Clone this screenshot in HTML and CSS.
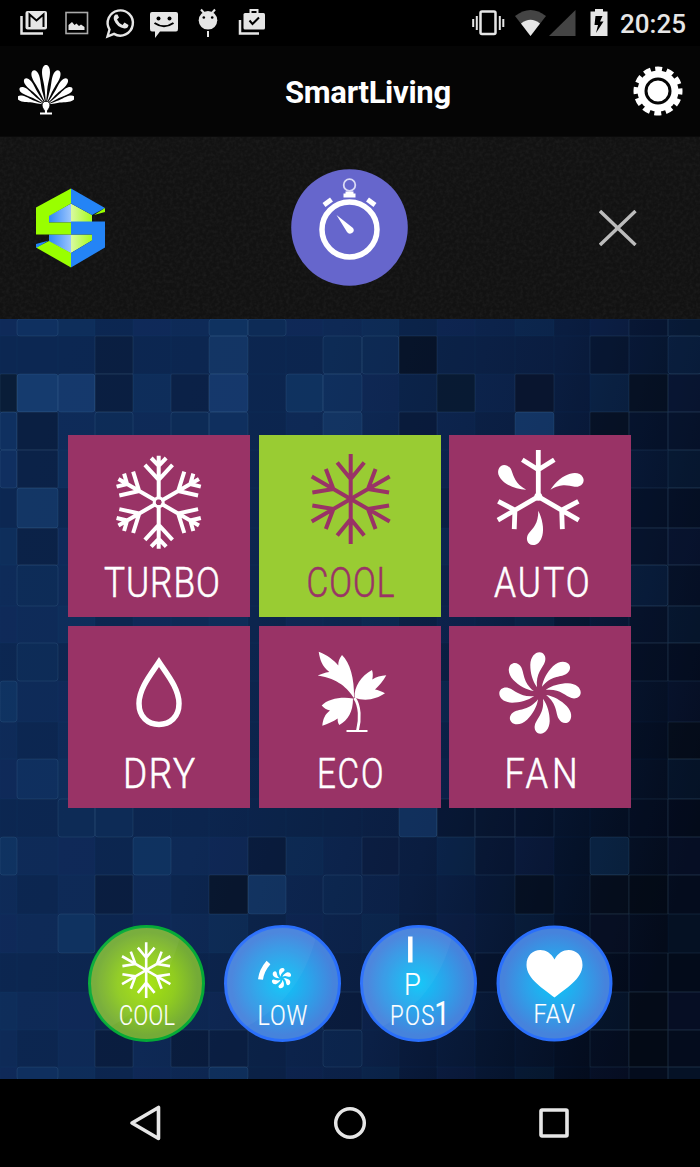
FILE: index.html
```html
<!DOCTYPE html>
<html lang="en">
  <head>
    <meta charset="UTF-8">
    <meta name="viewport" content="width=device-width, initial-scale=1.0">
    <title>SmartLiving</title>
    <link rel="stylesheet" href="styles.css">
  </head>
  <body>
    <!-- Shared shapes -->
    <svg width="0" height="0" class="defs">
      <defs>
        <path id="feather" d="M0 -2 L-1 -12 C-1.500 -22 -4 -27 -4 -33 C-4 -42.500 4 -42.500 4 -33 C4 -27 1.500 -22 1 -12 Z" />
        <path id="cool-arm" d="M0 0V-45M0 -20L-13.5 -36.5M0 -20L13.5 -36.5" />
        <g id="cool-flake">
          <use href="#cool-arm" />
          <use href="#cool-arm" transform="rotate(60)" />
          <use href="#cool-arm" transform="rotate(120)" />
          <use href="#cool-arm" transform="rotate(180)" />
          <use href="#cool-arm" transform="rotate(240)" />
          <use href="#cool-arm" transform="rotate(300)" />
        </g>
        <path id="turbo-arm" d="M0 -3V-46.5M0 -22.5L-13.8 -37.5M0 -22.5L13.8 -37.5M0 -36.5L-7.5 -44.3M0 -36.5L7.5 -44.3" />
        <path id="auto-arm" d="M0 0V-46.7M0 -27L-16 -37M0 -27L16 -37" />
        <path id="auto-drop" d="M0 14C4 22 6 32 4 39C2.500 45 -1 48.300 -5.300 48.300C-11.500 48.300 -13 41 -9.500 36.500C-5 31 0 27 0 14Z" />
        <path id="blade" d="M-3 -5.700C-7.500 -12 -9.700 -20 -9.700 -28C-9.500 -36 -5 -40.700 -0.500 -40.700C4 -40.700 6.400 -36 5 -31.500C3 -25 -4.500 -20 -3 -5.700Z" />
        <path id="gloss" d="M91.500 14C82 49 63 81 21.500 102A56 56 0 0 1 91.500 14Z" />
        <radialGradient id="blue" cx="50%" cy="50%" r="50%">
          <stop offset="0" stop-color="#0cc6f8" />
          <stop offset="0.5" stop-color="#2ca2ea" />
          <stop offset="0.9" stop-color="#4683dc" />
          <stop offset="1" stop-color="#4683dc" />
        </radialGradient>
        <radialGradient id="green" cx="50%" cy="50%" r="50%">
          <stop offset="0" stop-color="#a6e40c" />
          <stop offset="0.5" stop-color="#90cc20" />
          <stop offset="0.9" stop-color="#74ab37" />
          <stop offset="1" stop-color="#74ab37" />
        </radialGradient>
        <linearGradient id="logo-blue">
          <stop offset="0" stop-color="#2f86f8" />
          <stop offset="1" stop-color="#9cc5fb" />
        </linearGradient>
        <linearGradient id="logo-green">
          <stop offset="0" stop-color="#d9f9a0" />
          <stop offset="1" stop-color="#a6fb1c" />
        </linearGradient>
        <filter id="grain">
          <feTurbulence type="fractalNoise" baseFrequency="0.3" numOctaves="2" />
          <feColorMatrix values="0 0 0 0 1  0 0 0 0 1  0 0 0 0 1  0.08 0 0 0 -0.03" />
        </filter>
      </defs>
    </svg>

    <div class="status-bar">
      <div class="notifications">
        <svg width="44" height="46">
          <path class="line" d="M10.500 16V33.500H32" stroke-width="2.500" />
          <rect class="fill" x="14.500" y="11" width="21.500" height="18.500" rx="2" />
          <path d="M18.500 27V14.500L25.500 20.500L32.500 14.500V27" fill="none" stroke="#000" stroke-width="2" />
        </svg>
        <svg width="44" height="46">
          <rect x="11" y="12.500" width="21.500" height="21" fill="none" stroke="#aaa" stroke-width="1.600" />
          <path class="fill" d="M13.500 30V25L17 22L19.500 25L21.500 23.500L24 26L26 24.500L29.500 27V30Z" />
        </svg>
        <svg width="44" height="46">
          <path class="line" d="M8.500 36.500L10.500 29.500A12.600 12.600 0 1 1 15 33.900Z" stroke-width="2.400" />
          <path class="fill" d="M16.500 14.500Q14 16 15 20Q18 27.500 25.500 28.500Q29 28.500 29.500 25L25.500 22.500L23.500 25Q19.500 23 18 19.500L20 17.500L18.500 14.500Z" />
        </svg>
        <svg width="44" height="46">
          <path class="fill" d="M9 12H33Q35 12 35 14V29Q35 31.500 33 31.500H17L12 38V31.500H9Q7 31.500 7 29V14Q7 12 9 12Z" />
          <circle cx="15.500" cy="18.500" r="2" />
          <circle cx="26.500" cy="18.500" r="2" />
          <path d="M11.500 23Q21 29.500 30.500 23" fill="none" stroke="#000" stroke-width="2" />
        </svg>
        <svg width="44" height="46">
          <circle class="fill" cx="21" cy="20.300" r="9.300" />
          <path class="line" d="M17 13L14 9.500M25 13L28 9.500M21 31V37" stroke-width="2" />
          <circle cx="16.800" cy="17.500" r="1.300" />
          <circle cx="25.200" cy="17.500" r="1.300" />
        </svg>
        <svg width="44" height="46">
          <path class="line" d="M9 20V33.500H28" stroke-width="2.500" />
          <rect class="fill" x="12.500" y="13" width="21.500" height="16.500" rx="1.500" />
          <path class="line" d="M19.500 13V10H26.500V13" stroke-width="2" />
          <path d="M18.500 20.500L21.500 24L28 17.500" fill="none" stroke="#000" stroke-width="2" />
        </svg>
      </div>
      <div class="system">
        <svg width="34" height="46">
          <rect class="line" x="9.500" y="11.500" width="15" height="22.500" rx="1.500" stroke-width="2.500" />
          <path class="line" d="M2.200 19V27M5.800 16V30M28.800 16V30M32.300 19V27" stroke-width="2" />
        </svg>
        <svg class="wifi" width="32" height="46">
          <path fill="#444" d="M0 16Q15.500 4 31 16L15.500 36Z" />
          <path class="fill" d="M6 23.500Q15.500 16 25 23.500L15.500 36Z" />
        </svg>
        <svg class="signal" width="28" height="46">
          <path fill="#444" d="M0 36H26.500V10Z" />
        </svg>
        <svg class="battery" width="18" height="46">
          <path class="fill" d="M5 9H13V11.500H17.500V36H0.500V11.500H5Z" />
          <path d="M5.500 16H12.500L10 21.500H13.500L6 33L8 25H4.500Z" />
        </svg>
        <span class="time">20:25</span>
      </div>
    </div>

    <div class="header">
      <svg class="palm" width="56" height="52" fill="#fff">
        <g transform="translate(28 40)">
          <use href="#feather" />
          <use href="#feather" transform="rotate(-20) scale(0.920)" />
          <use href="#feather" transform="rotate(20) scale(0.920)" />
          <use href="#feather" transform="rotate(-39) scale(0.840)" />
          <use href="#feather" transform="rotate(39) scale(0.840)" />
          <use href="#feather" transform="rotate(-57) scale(0.780)" />
          <use href="#feather" transform="rotate(57) scale(0.780)" />
          <use href="#feather" transform="rotate(-75) scale(0.740)" />
          <use href="#feather" transform="rotate(75) scale(0.740)" />
          <path d="M0 9C-2 4 -4 3 -4 0C-4 -5 4 -5 4 0C4 3 2 4 0 9Z" stroke="#050505" stroke-width="1" />
          <path d="M-1 4H1V8H-1ZM-6 7.500H6V9.500H-6Z" />
        </g>
      </svg>
      <h1>SmartLiving</h1>
      <svg class="gear" width="50" height="50" viewBox="-25 -25 50 50">
        <circle r="20.500" fill="#fff" />
        <circle r="22" fill="none" stroke="#fff" stroke-width="5" stroke-dasharray="7 4.519" stroke-dashoffset="3.500" />
        <circle r="12" fill="none" stroke="#050505" stroke-width="3" />
      </svg>
    </div>

    <div class="toolbar">
      <svg class="texture" width="700" height="182"><rect width="700" height="182" filter="url(#grain)" /></svg>
      <svg class="logo" width="70" height="80" viewBox="36 187.500 70 80">
        <path fill="url(#logo-blue)" d="M49 215L71 203V222H49ZM49 234H71V253L49 241Z" />
        <path fill="url(#logo-green)" d="M71 203L92 214.500V222H71ZM71 234H92V240L71 252.500Z" />
        <path fill="#99ff00" d="M71 188V203L49 215.500V222H71V234H36V207Z" />
        <path fill="#2484f6" d="M71 188L105 207.500L92 214.500L71 203ZM71 221H105V247L71 267V252.500L92 240V234H71Z" />
        <path fill="#99ff00" d="M49 240.500L71 252.500V267L36 247Z" />
        <path fill="#2484f6" d="M36 243.500L49 240L36 247.500Z" />
        <path fill="#99ff00" d="M105 207.500V211.500L94 214.500Z" />
      </svg>
      <svg class="clock" width="117" height="117" viewBox="-58.500 -58.500 117 117">
        <circle r="58.300" fill="#6666cc" />
        <g fill="none" stroke="#fff">
          <circle cy="2" r="27.500" stroke-width="5.500" />
          <circle cy="-42.500" r="5.800" stroke-width="1.800" stroke="#dadaf5" />
          <path d="M-25.500 -22.500L-18 -28M25.500 -22.500L18 -28" stroke-width="5" />
        </g>
        <path fill="#fff" d="M-4 -36H4V-34H6V-30H-6V-34H-4ZM-13 -12.500L3.500 0.500A3.500 3.500 0 1 1 -2.500 4.500Z" />
      </svg>
      <svg class="close" width="38" height="36">
        <path d="M1 1L36.500 35M36.500 1L1 35" stroke="#bcbcbc" stroke-width="3.400" />
      </svg>
    </div>

    <div class="screen">
      <svg class="mosaic" id="mosaic" width="700" height="761"></svg>

      <div class="modes">
        <svg class="tile" viewBox="0 0 182 182">
          <g class="stroke" transform="translate(90.700 67.300)" stroke-width="4">
            <use href="#turbo-arm" />
            <use href="#turbo-arm" transform="rotate(60)" />
            <use href="#turbo-arm" transform="rotate(120)" />
            <use href="#turbo-arm" transform="rotate(180)" />
            <use href="#turbo-arm" transform="rotate(240)" />
            <use href="#turbo-arm" transform="rotate(300)" />
            <circle r="4.500" stroke-width="3" />
          </g>
          <text transform="translate(36 162.200) scale(0.840 1)" textLength="138">TURBO</text>
        </svg>
        <svg class="tile active" viewBox="0 0 182 182">
          <use class="stroke" href="#cool-flake" transform="translate(91.700 64)" stroke-width="4" />
          <text transform="translate(47.500 162.200) scale(0.800 1)" textLength="110">COOL</text>
        </svg>
        <svg class="tile" viewBox="0 0 182 182">
          <g transform="translate(89.300 61.700)">
            <g class="stroke" stroke-width="4.800">
              <use href="#auto-arm" />
              <use href="#auto-arm" transform="rotate(120)" />
              <use href="#auto-arm" transform="rotate(240)" />
            </g>
            <circle r="4" />
            <use href="#auto-drop" />
            <use href="#auto-drop" transform="rotate(120)" />
            <use href="#auto-drop" transform="rotate(240)" />
          </g>
          <text transform="translate(45 162.200) scale(0.840 1)" textLength="114">AUTO</text>
        </svg>
        <svg class="tile" viewBox="0 0 182 182">
          <path class="stroke" d="M91 36C84 47 71 62 71 77.500C71 91 80 98.500 91 98.500C102 98.500 111 91 111 77.500C111 62 98 47 91 36Z" stroke-width="5.500" />
          <text transform="translate(55 162) scale(0.880 1)" textLength="82">DRY</text>
        </svg>
        <svg class="tile" viewBox="0 0 182 182">
          <path d="M95 72C88 62 80 53 58.700 49.500C62 48 66 46.500 70.300 46C63 40 61 34 59.700 25.700C68 29 75 34 79.300 39.500C79 36 80.500 32 83 29C91 37 95.500 52 95 72Z" />
          <path d="M95.500 71.500C95 61 102 50 113 44C114 47 114 50 113.300 53.500C117 51 122 49.500 127.300 49.300C124 55 120 60 116 63.500C119 64 123 65.500 126 67.300C118 73 106 76 95.500 71.500Z" />
          <path d="M94 72.500C82 70.500 69 73 62.700 79.500C65 82 67.500 84 71 84.500C66 88 64 93 63.300 99.700C69 98 74 95.500 78.700 92.500C78.500 95 79 97 80.300 99C89 94 94 86 94 72.500Z" />
          <path class="stroke" d="M95.500 72C101 80 101.500 93 98.500 104.500" stroke-width="2.800" />
          <path class="stroke" d="M87.500 105H108.500" stroke-width="2" />
          <text transform="translate(58 162) scale(0.790 1)" textLength="84">ECO</text>
        </svg>
        <svg class="tile" viewBox="0 0 182 182">
          <g transform="translate(91 67)">
            <use href="#blade" />
            <use href="#blade" transform="rotate(45)" />
            <use href="#blade" transform="rotate(90)" />
            <use href="#blade" transform="rotate(135)" />
            <use href="#blade" transform="rotate(180)" />
            <use href="#blade" transform="rotate(225)" />
            <use href="#blade" transform="rotate(270)" />
            <use href="#blade" transform="rotate(315)" />
          </g>
          <text transform="translate(55.500 162) scale(0.860 1)" textLength="85">FAN</text>
        </svg>
      </div>

      <div class="shortcuts">
        <svg class="round" viewBox="0 0 117 117">
          <circle cx="58.500" cy="58.500" r="57" fill="url(#green)" stroke="#05aa37" stroke-width="3" />
          <use class="gloss" href="#gloss" />
          <use class="stroke" href="#cool-flake" transform="translate(58.200 45.200) scale(0.620)" stroke-width="4.200" />
          <text transform="translate(31 99.500) scale(0.800 1)" textLength="70">COOL</text>
        </svg>
        <svg class="round" viewBox="0 0 117 117">
          <circle cx="58.500" cy="58.500" r="57" fill="url(#blue)" stroke="#2a6ffb" stroke-width="3" />
          <use class="gloss" href="#gloss" />
          <path class="stroke" d="M36.500 54.500Q37.500 45.500 44.500 37.500" stroke-width="5" />
          <g transform="translate(57.500 53.200) scale(0.250)">
            <use href="#blade" transform="rotate(8) scale(1.400 1)" />
            <use href="#blade" transform="rotate(68) scale(1.400 1)" />
            <use href="#blade" transform="rotate(128) scale(1.400 1)" />
            <use href="#blade" transform="rotate(188) scale(1.400 1)" />
            <use href="#blade" transform="rotate(248) scale(1.400 1)" />
            <use href="#blade" transform="rotate(308) scale(1.400 1)" />
          </g>
          <text transform="translate(33.500 99.500) scale(0.860 1)" textLength="58">LOW</text>
        </svg>
        <svg class="round" viewBox="0 0 117 117">
          <circle cx="58.500" cy="58.500" r="57" fill="url(#blue)" stroke="#2a6ffb" stroke-width="3" />
          <use class="gloss" href="#gloss" />
          <path class="stroke" d="M50.300 11.500V37.500" stroke-width="4.500" />
          <text class="pos" transform="translate(44 69.500) scale(0.880 1)">P</text>
          <text transform="translate(30 99.500) scale(0.820 1)" textLength="54">POS</text>
          <text class="num" transform="translate(74.500 99.500) scale(0.800 1)">1</text>
        </svg>
        <svg class="round" viewBox="0 0 117 117">
          <circle cx="58.500" cy="58.500" r="56.500" fill="url(#blue)" stroke="#2a6ffb" stroke-width="3" />
          <path d="M58.500 72.500C48 64 30.500 54 30.500 40C30.500 23 51 19.500 58.500 34.500C66 19.500 86.500 23 86.500 40C86.500 54 69 64 58.500 72.500Z" />
          <text class="fav" transform="translate(37.500 98) scale(0.900 1)" textLength="46">FAV</text>
        </svg>
      </div>
    </div>

    <div class="nav-bar">
      <svg width="36" height="36">
        <path class="line" d="M4 18L30.500 2.500V33.500Z" stroke-width="3.600" stroke-linejoin="round" />
      </svg>
      <svg width="36" height="36">
        <circle class="line" cx="18" cy="18" r="14.300" stroke-width="3.500" />
      </svg>
      <svg width="36" height="36">
        <rect class="line" x="5" y="5" width="26" height="26" rx="1" stroke-width="3.600" />
      </svg>
    </div>

    <script src="mosaic.js"></script>
  </body>
</html>
```

FILE: styles.css
```css
body {
  margin: 0;
  width: 700px;
  height: 1167px;
  display: flex;
  flex-direction: column;
  overflow: hidden;
  background-color: #000;
  font-family: Roboto, "Liberation Sans", sans-serif;
}

svg {
  display: block;
  flex: none;
}

.defs {
  position: absolute;
}

.fill {
  fill: #e6e6e6;
}

.line {
  fill: none;
  stroke: #e6e6e6;
}

.status-bar {
  display: flex;
  justify-content: space-between;
  height: 46px;
  padding: 0 14px 0 11px;
}

.notifications,
.system {
  display: flex;
}

.system {
  margin-right: 1px;
}

.wifi {
  margin-left: 10px;
}

.signal {
  margin-left: 2px;
}

.battery {
  margin-left: 13px;
}

.time {
  width: 65px;
  margin-left: 12px;
  color: #e6e6e6;
  font-size: 26px;
  font-weight: 500;
  line-height: 48px;
}

.header {
  display: flex;
  align-items: center;
  height: 90px;
  padding: 0 17px 0 18px;
  background-color: #050505;
  border-bottom: 1px solid #0a0a0a;
}

.header h1 {
  margin: 4px auto 0 211px;
  color: #fff;
  font-size: 31px;
  font-weight: 700;
  letter-spacing: -0.3px;
}

.toolbar {
  position: relative;
  display: flex;
  align-items: center;
  justify-content: space-between;
  height: 182px;
  padding: 0 63px 0 36px;
  background-color: #121212;
}

.texture {
  position: absolute;
  left: 0;
  top: 0;
}

.logo,
.clock,
.close {
  position: relative;
}

.clock {
  margin-left: 121px;
  margin-right: 128px;
}

.screen {
  position: relative;
  height: 761px;
  overflow: hidden;
}

.mosaic {
  position: absolute;
  left: 0;
  top: 0;
}

.modes {
  position: relative;
  display: grid;
  grid-template-columns: repeat(3, 182px);
  gap: 9px 8.5px;
  padding: 116px 0 0 68px;
}

.tile {
  width: 182px;
  height: 182px;
  background-color: #993366;
  fill: #fff;
  color: #fff;
}

.tile.active {
  background-color: #99cc33;
  fill: #993366;
  color: #993366;
}

.stroke {
  fill: none;
  stroke: currentColor;
}

text {
  fill: currentColor;
  font-weight: 300;
}

.tile text {
  font-size: 42px;
  stroke: currentColor;
  stroke-width: 0.6px;
}

.shortcuts {
  position: relative;
  display: flex;
  gap: 19px;
  padding: 117px 0 0 88px;
}

.round {
  width: 117px;
  height: 117px;
  fill: #fff;
  color: #fff;
}

.round text {
  font-size: 27px;
  stroke: currentColor;
  stroke-width: 0.2px;
}

.round .pos {
  font-size: 31px;
}

.round .num {
  font-size: 33px;
  font-weight: 400;
}

.round .fav {
  font-size: 26px;
}

.gloss {
  fill: rgba(255, 255, 255, 0.04);
}

.nav-bar {
  display: flex;
  align-items: center;
  justify-content: center;
  gap: 168px;
  height: 88px;
}
```

FILE: mosaic.js
```js
const NS = 'http://www.w3.org/2000/svg';

// Column and row edges of the mosaic
const xs = [0, 17, 58, 95, 133, 171, 209, 248, 286, 323, 362, 399, 437, 475, 515, 554, 590, 629, 668, 701];
const ys = [0, 17, 55, 93, 131, 169, 209, 246, 287, 324, 362, 403, 440, 480, 518, 556, 595, 634, 673, 711, 748, 761];

// Brightness of each block, 0 dark to 4 light
const levels = [
  '2322223322222222211',
  '2221224223302222123',
  '0441214233220202201',
  '3123233224212242011',
  '3122222222222222221',
  '2422222222222222211',
  '2122222222222222211',
  '2322222222222222231',
  '2222222222222222211',
  '2322222222222222211',
  '3222222222222222222',
  '2222222222222222220',
  '2322222222222222221',
  '2233222222241112211',
  '3222322122122122321',
  '2221220423222202001',
  '2232222222222222022',
  '2222322222222122211',
  '2222322221222222101',
  '2221211223222222101',
  '2322223222222222211',
];

const overlays = [
  'rgba(5, 12, 24, 0.6)',
  'rgba(5, 16, 38, 0.32)',
  'rgba(20, 50, 110, 0)',
  'rgba(24, 68, 122, 0.22)',
  'rgba(32, 80, 140, 0.42)',
];
const tints = ['rgba(26, 36, 95, 0.1)', 'rgba(0, 0, 0, 0.08)', 'rgba(20, 75, 120, 0.1)', 'rgba(0, 0, 0, 0)'];

const mosaic = document.getElementById('mosaic');

mosaic.innerHTML = `
  <defs>
    <linearGradient id="base" x1="0" y1="0.35" x2="1" y2="0.65">
      <stop offset="0" stop-color="#0e2b59" />
      <stop offset="0.35" stop-color="#0e2955" />
      <stop offset="0.65" stop-color="#0b2046" />
      <stop offset="0.85" stop-color="#06142d" />
      <stop offset="1" stop-color="#040b1a" />
    </linearGradient>
  </defs>
  <rect width="700" height="761" fill="url(#base)" />`;

function addBlock(col, row) {
  const level = Number(levels[row][col]);
  const edge = level === 2 ? 0.03 : 0.13;
  [overlays[level], tints[(col * 7 + row * 5 + col * row) % 4]].forEach((fill, i) => {
    const rect = document.createElementNS(NS, 'rect');
    rect.setAttribute('x', xs[col]);
    rect.setAttribute('y', ys[row]);
    rect.setAttribute('width', xs[col + 1] - xs[col]);
    rect.setAttribute('height', ys[row + 1] - ys[row]);
    rect.setAttribute('rx', level > 2 ? 3 : 1);
    rect.setAttribute('fill', fill);
    if (i === 1) {
      rect.setAttribute('stroke', `rgba(110, 160, 190, ${edge})`);
    }
    mosaic.appendChild(rect);
  });
}

for (let row = 0; row < levels.length; row++) {
  for (let col = 0; col < levels[row].length; col++) {
    addBlock(col, row);
  }
}
```
